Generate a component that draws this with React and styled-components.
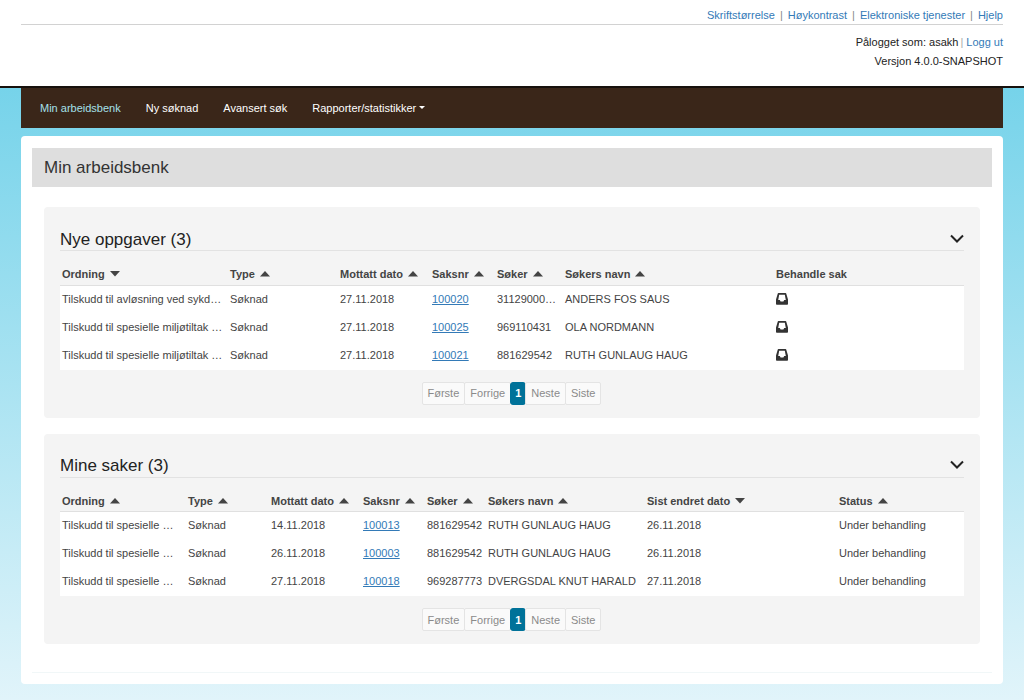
import React from 'react';
import styled, { createGlobalStyle, css } from 'styled-components';

const GlobalStyle = createGlobalStyle`
  *, *::before, *::after { box-sizing: border-box; }
  body {
    margin: 0;
    background: #fff;
    color: #222;
    font-family: Arial, "Liberation Sans", sans-serif;
    font-size: 11px;
    line-height: 16px;
  }
`;

const Page = styled.div`
  min-height: 100vh;
  display: flex;
  flex-direction: column;
`;

const Header = styled.header`
  display: flex;
  flex-direction: column;
  padding: 7px 21px 17px;
`;

const TopLinks = styled.nav`
  display: flex;
  justify-content: flex-end;
  padding-bottom: 1px;
  border-bottom: 1px solid #d2d2d2;
`;

const Link = styled.a`
  color: #337ab7;
  text-decoration: ${(p) => (p.$underlined ? 'underline' : 'none')};
`;

const TopItem = styled.span`
  & + &::before {
    content: '|';
    margin: 0 5px;
    color: #888;
  }
`;

const UserInfo = styled.div`
  display: flex;
  flex-direction: column;
  align-items: flex-end;
  gap: 3px;
  padding-top: 9px;
`;

const UserLine = styled.div``;

const Divider = styled.span`
  margin-left: 2px;
  color: #aaa;
`;

const Backdrop = styled.div`
  flex: 1;
  border-top: 2px solid #17110d;
  padding: 0 21px 17px;
  background: linear-gradient(#76d3ea, #e1f4fa);
`;

const NavBar = styled.nav`
  display: flex;
  align-items: center;
  gap: 25px;
  height: 40px;
  padding-left: 19px;
  background: #3a2619;
`;

const navText = css`
  color: ${(p) => (p.$active ? '#a5e0ea' : '#fff')};
  text-decoration: none;
  font: inherit;
`;

const NavLink = styled.a`
  ${navText}
`;

const NavButton = styled.button`
  ${navText}
  display: flex;
  align-items: center;
  gap: 3px;
  padding: 0;
  border: 0;
  background: none;
`;

const Sheet = styled.main`
  margin-top: 8px;
  padding: 12px 11px 11px;
  border-radius: 4px;
  background: #fff;
`;

const Frame = styled.div`
  border-bottom: 1px solid #f1f7f8;
`;

const PageTitle = styled.h1`
  margin: 0;
  padding: 0 12px;
  background: #dedede;
  color: #333;
  font-size: 17px;
  font-weight: 400;
  line-height: 39px;
`;

const Panels = styled.div`
  display: flex;
  flex-direction: column;
  gap: 16px;
  padding: 20px 12px 28px;
`;

const Panel = styled.section`
  padding: 20px 16px 13px;
  border-radius: 4px;
  background: #f4f4f4;
`;

const PanelHead = styled.div`
  display: flex;
  align-items: center;
  justify-content: space-between;
  height: 24px;
  border-bottom: 1px solid #e2e2e2;
`;

const PanelTitle = styled.h2`
  margin: 0;
  padding-top: 2px;
  color: #222;
  font-size: 17px;
  font-weight: 400;
  line-height: 22px;
`;

const Toggle = styled.button`
  display: flex;
  padding: 0;
  border: 0;
  background: none;
`;

const Table = styled.table`
  width: 100%;
  table-layout: fixed;
  border-collapse: collapse;
  background: #fff;
`;

const HeadCell = styled.th`
  height: 34px;
  padding: 15px 2px 2px;
  border-bottom: 1px solid #e0e0e0;
  background: #f4f4f4;
  color: #444;
  text-align: left;
  white-space: nowrap;
`;

const SortButton = styled.button`
  display: flex;
  align-items: center;
  gap: 5px;
  padding: 0;
  border: 0;
  background: none;
  color: inherit;
  font: inherit;
`;

const Cell = styled.td`
  padding: 5px 2px 7px;
  color: #444;
  overflow: hidden;
  text-overflow: ellipsis;
  white-space: nowrap;
`;

const IconButton = styled.button`
  display: flex;
  align-items: center;
  height: 16px;
  padding: 0;
  border: 0;
  background: none;
`;

const Pager = styled.nav`
  display: flex;
  justify-content: center;
  margin-top: 12px;
`;

const PageButton = styled.button`
  height: 23px;
  margin-left: -1px;
  padding: 0 ${(p) => (p.$current ? 4 : 5)}px;
  border: 1px solid ${(p) => (p.$current ? '#007299' : '#e4e4e4')};
  border-radius: ${(p) => (p.$current ? 3 : 2)}px;
  background: ${(p) => (p.$current ? '#007299' : '#fafafa')};
  color: ${(p) => (p.$current ? '#fff' : '#8a8a8a')};
  font: inherit;
  font-weight: ${(p) => (p.$current ? 700 : 400)};
`;

const InboxIcon = () => (
  <svg width="12" height="12" viewBox="0 0 12 12" aria-hidden="true">
    <path
      fill="#333"
      fillRule="evenodd"
      d="M2.500 0h7q.7 0 .8.7L12 6.600v4.400q0 .8-.8.8H.8q-.8 0-.8-.8V6.600L1.700.7Q1.800 0 2.500 0zM3.200 1.700L2.200 7H3.800L4.600 8.600H7.400L8.200 7H9.800L8.800 1.700z"
    />
  </svg>
);

const Chevron = () => (
  <svg width="14" height="10" viewBox="0 0 14 10" aria-hidden="true">
    <path d="M1 1.500L7 7.500L13 1.500" fill="none" stroke="#222" strokeWidth="2" />
  </svg>
);

const Arrow = ({ down }) => (
  <svg width="10" height="8" viewBox="0 0 10 8" aria-hidden="true">
    <path d={down ? 'M0 1H10L5 6.500z' : 'M0 6.500H10L5 1z'} fill="#444" />
  </svg>
);

const Caret = () => (
  <svg width="6" height="4" viewBox="0 0 6 4" aria-hidden="true">
    <path d="M0 0H6L3 3z" fill="#fff" />
  </svg>
);

const newTasks = {
  title: 'Nye oppgaver (3)',
  columns: [
    { label: 'Ordning', weight: 168, sort: 'down' },
    { label: 'Type', weight: 110, sort: 'up' },
    { label: 'Mottatt dato', weight: 92, sort: 'up' },
    { label: 'Saksnr', weight: 65, sort: 'up', type: 'link' },
    { label: 'Søker', weight: 68, sort: 'up' },
    { label: 'Søkers navn', weight: 211, sort: 'up' },
    { label: 'Behandle sak', weight: 190, type: 'action' },
  ],
  rows: [
    ['Tilskudd til avløsning ved sykd…', 'Søknad', '27.11.2018', '100020', '31129000…', 'ANDERS FOS SAUS', ''],
    ['Tilskudd til spesielle miljøtiltak …', 'Søknad', '27.11.2018', '100025', '969110431', 'OLA NORDMANN', ''],
    ['Tilskudd til spesielle miljøtiltak …', 'Søknad', '27.11.2018', '100021', '881629542', 'RUTH GUNLAUG HAUG', ''],
  ],
};

const myCases = {
  title: 'Mine saker (3)',
  columns: [
    { label: 'Ordning', weight: 126, sort: 'up' },
    { label: 'Type', weight: 83, sort: 'up' },
    { label: 'Mottatt dato', weight: 92, sort: 'up' },
    { label: 'Saksnr', weight: 64, sort: 'up', type: 'link' },
    { label: 'Søker', weight: 61, sort: 'up' },
    { label: 'Søkers navn', weight: 159, sort: 'up' },
    { label: 'Sist endret dato', weight: 192, sort: 'down' },
    { label: 'Status', weight: 127, sort: 'up' },
  ],
  rows: [
    ['Tilskudd til spesielle …', 'Søknad', '14.11.2018', '100013', '881629542', 'RUTH GUNLAUG HAUG', '26.11.2018', 'Under behandling'],
    ['Tilskudd til spesielle …', 'Søknad', '26.11.2018', '100003', '881629542', 'RUTH GUNLAUG HAUG', '26.11.2018', 'Under behandling'],
    ['Tilskudd til spesielle …', 'Søknad', '27.11.2018', '100018', '969287773', 'DVERGSDAL KNUT HARALD', '27.11.2018', 'Under behandling'],
  ],
};

function CellContent({ type, value }) {
  if (type === 'link') return <Link href="#" $underlined>{value}</Link>;
  if (type === 'action') return <IconButton aria-label="Behandle sak"><InboxIcon /></IconButton>;
  return value;
}

function TaskPanel({ title, columns, rows }) {
  const total = columns.reduce((sum, c) => sum + c.weight, 0);
  return (
    <Panel>
      <PanelHead>
        <PanelTitle>{title}</PanelTitle>
        <Toggle aria-label={title}><Chevron /></Toggle>
      </PanelHead>
      <Table>
        <colgroup>
          {columns.map((c) => (
            <col key={c.label} style={{ width: `${(c.weight / total) * 100}%` }} />
          ))}
        </colgroup>
        <thead>
          <tr>
            {columns.map((c) => (
              <HeadCell key={c.label} scope="col">
                {c.sort ? (
                  <SortButton>{c.label}<Arrow down={c.sort === 'down'} /></SortButton>
                ) : c.label}
              </HeadCell>
            ))}
          </tr>
        </thead>
        <tbody>
          {rows.map((row) => (
            <tr key={row[3]}>
              {row.map((value, i) => (
                <Cell key={columns[i].label}>
                  <CellContent type={columns[i].type} value={value} />
                </Cell>
              ))}
            </tr>
          ))}
        </tbody>
      </Table>
      <Pager aria-label={title}>
        <PageButton>Første</PageButton>
        <PageButton>Forrige</PageButton>
        <PageButton $current>1</PageButton>
        <PageButton>Neste</PageButton>
        <PageButton>Siste</PageButton>
      </Pager>
    </Panel>
  );
}

export default function App() {
  return (
    <Page>
      <GlobalStyle />
      <Header>
        <TopLinks>
          {['Skriftstørrelse', 'Høykontrast', 'Elektroniske tjenester', 'Hjelp'].map((label) => (
            <TopItem key={label}><Link href="#">{label}</Link></TopItem>
          ))}
        </TopLinks>
        <UserInfo>
          <UserLine>
            Pålogget som: asakh<Divider>|</Divider> <Link href="#">Logg ut</Link>
          </UserLine>
          <UserLine>Versjon 4.0.0-SNAPSHOT</UserLine>
        </UserInfo>
      </Header>
      <Backdrop>
        <NavBar>
          <NavLink href="#" $active>Min arbeidsbenk</NavLink>
          <NavLink href="#">Ny søknad</NavLink>
          <NavLink href="#">Avansert søk</NavLink>
          <NavButton>Rapporter/statistikker<Caret /></NavButton>
        </NavBar>
        <Sheet>
          <Frame>
            <PageTitle>Min arbeidsbenk</PageTitle>
            <Panels>
              <TaskPanel {...newTasks} />
              <TaskPanel {...myCases} />
            </Panels>
          </Frame>
        </Sheet>
      </Backdrop>
    </Page>
  );
}
